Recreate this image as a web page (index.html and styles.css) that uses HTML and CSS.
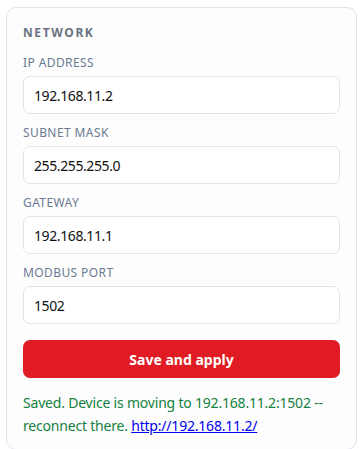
FILE: index.html
```html
<!doctype html>
<html>
	<head>
		<meta charset="utf-8" />
		<title>Network</title>
		<link rel="stylesheet" href="styles.css">
	</head>
	<body>
		<section class="card">
			<h2>Network</h2>
			<form class="form">
				<label class="field">
					<span>IP address</span>
					<input type="text" value="192.168.11.2" />
				</label>
				<label class="field">
					<span>Subnet mask</span>
					<input type="text" value="255.255.255.0" />
				</label>
				<label class="field">
					<span>Gateway</span>
					<input type="text" value="192.168.11.1" />
				</label>
				<label class="field">
					<span>Modbus port</span>
					<input type="text" value="1502" />
				</label>
				<button type="button" class="save">Save and apply</button>
			</form>
			<p class="status">Saved. Device is moving to 192.168.11.2:1502 -- reconnect there. <a href="http://192.168.11.2/">http://192.168.11.2/</a></p>
		</section>
	</body>
</html>
```

FILE: styles.css
```css
body {
	margin: 7px 3px 2px 6px;
	font-family: "Noto Sans", sans-serif;
	font-size: 14px;
	background: #fff;
}

.card {
	border: 1px solid #dfe3ec;
	border-radius: 10px;
	background: #fdfdfe;
	padding: 17px 16px 12px;
}

h2 {
	margin: 0 0 14px;
	font-size: 12px;
	line-height: 16px;
	font-weight: 700;
	letter-spacing: 1.6px;
	text-transform: uppercase;
	color: #6b7280;
}

.form {
	display: flex;
	flex-direction: column;
	gap: 11px;
}

.field {
	display: flex;
	flex-direction: column;
	gap: 5px;
}

.field span {
	font-size: 12px;
	line-height: 16px;
	letter-spacing: .4px;
	text-transform: uppercase;
	color: #6b7a90;
}

input {
	height: 38px;
	box-sizing: border-box;
	border: 1px solid #dfe3ec;
	border-radius: 7px;
	padding: 0 10px;
	font: inherit;
	letter-spacing: -.4px;
	color: #111;
	background: #fff;
}

.save {
	margin-top: 5px;
	height: 38px;
	border: 0;
	border-radius: 7px;
	background: #e11b24;
	color: #fff;
	font: inherit;
	font-weight: 700;
}

.status {
	margin: 13px 0 0;
	line-height: 23px;
	letter-spacing: -.2px;
	color: #15803d;
}

.status a {
	color: #0000ee;
}
```
